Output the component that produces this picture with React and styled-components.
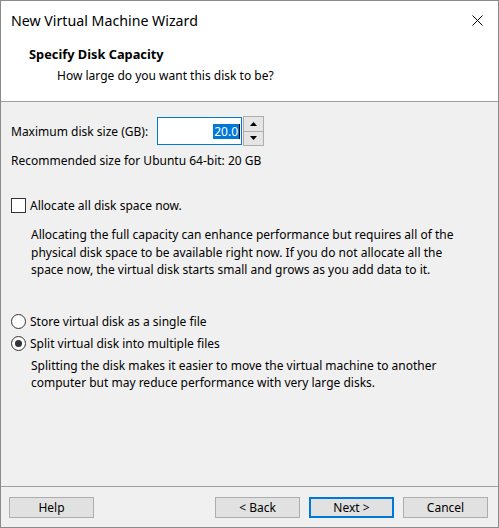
import React from 'react';
import styled, { createGlobalStyle } from 'styled-components';

const Global = createGlobalStyle`
  html, body { margin: 0; padding: 0; background: #ffffff; }
  body { font-family: "Noto Sans", sans-serif; }
`;

const Window = styled.div`
  width: 499px;
  height: 528px;
  box-sizing: border-box;
  border: 1px solid #8a8a8a;
  display: flex;
  flex-direction: column;
  background: #f0f0f0;
  font-family: "Noto Sans", sans-serif;
  font-size: 12px;
  color: #000;
  overflow: hidden;
`;

const Header = styled.div`
  height: 101px;
  flex-shrink: 0;
  box-sizing: border-box;
  background: #ffffff;
  border-bottom: 1px solid #a0a0a0;
  display: flex;
  flex-direction: column;
`;

const TitleBar = styled.div`
  height: 39px;
  display: flex;
  align-items: center;
  justify-content: space-between;
  padding: 0 15px 0 10px;
`;

const Title = styled.div`
  font-size: 14.2px;
  color: #000;
`;

const CloseIcon = styled.svg`
  width: 11px;
  height: 11px;
  display: block;
`;

const HeaderText = styled.div`
  padding-left: 28px;
  display: flex;
  flex-direction: column;
`;

const Heading = styled.div`
  font-weight: 700;
  font-size: 12.8px;
  line-height: 17px;
  margin-top: 6px;
`;

const SubHeading = styled.div`
  line-height: 17px;
  margin: 4px 0 0 28px;
`;

const Body = styled.div`
  flex: 1;
  display: flex;
  flex-direction: column;
  padding: 0 10px;
`;

const SpinRow = styled.div`
  margin-top: 15px;
  height: 28px;
  display: flex;
  align-items: center;
`;

const Label = styled.div`
  width: 146px;
  flex-shrink: 0;
  line-height: 17px;
`;

const SpinBox = styled.div`
  display: flex;
  align-items: center;
`;

const TextField = styled.div`
  width: 85px;
  height: 28px;
  box-sizing: border-box;
  border: 1px solid #0078d7;
  background: #ffffff;
  display: flex;
  align-items: center;
  justify-content: flex-end;
  padding-right: 1px;
`;

const Selected = styled.span`
  background: #0078d7;
  color: #ffffff;
  line-height: 15px;
  padding: 0 1px;
`;

const Caret = styled.span`
  width: 1px;
  height: 15px;
  background: #000;
`;

const SpinButtons = styled.div`
  margin-left: 1px;
  width: 21px;
  height: 30px;
  display: flex;
  flex-direction: column;
`;

const SpinButton = styled.div`
  flex: 1;
  box-sizing: border-box;
  border: 1px solid #adadad;
  border-top-width: ${p => (p.$down ? '0' : '1px')};
  background: #e5e5e5;
  display: flex;
  align-items: center;
  justify-content: center;
`;

const Arrow = styled.svg`
  width: 7px;
  height: 4px;
  display: block;
`;

const Line = styled.div`
  line-height: 17px;
  margin-top: ${p => p.$mt || 0}px;
`;

const OptionRow = styled.div`
  margin-top: ${p => p.$mt || 0}px;
  height: 17px;
  display: flex;
  align-items: center;
`;

const CheckBox = styled.div`
  width: 15px;
  height: 15px;
  box-sizing: border-box;
  border: 1px solid #333333;
  background: #ffffff;
  margin-right: 4px;
  flex-shrink: 0;
`;

const Radio = styled.div`
  width: 15px;
  height: 15px;
  box-sizing: border-box;
  border: 1px solid #333333;
  border-radius: 50%;
  background: #ffffff;
  margin-right: 4px;
  flex-shrink: 0;
  display: flex;
  align-items: center;
  justify-content: center;
  &::after {
    content: '';
    width: 7px;
    height: 7px;
    border-radius: 50%;
    background: ${p => (p.$checked ? '#333333' : 'transparent')};
  }
`;

const Paragraph = styled.div`
  margin: ${p => p.$mt || 0}px 0 0 20px;
  line-height: 17.5px;
`;

const Footer = styled.div`
  flex-shrink: 0;
  height: 41px;
  box-sizing: border-box;
  border-top: 1px solid #a0a0a0;
  padding: 10px 10px 0 8px;
  display: flex;
  align-items: flex-start;
`;

const Spacer = styled.div`
  flex: 1;
`;

const ButtonGroup = styled.div`
  display: flex;
  gap: 9px;
`;

const Button = styled.div`
  width: 85px;
  height: 21px;
  box-sizing: border-box;
  border: ${p => (p.$default ? '2px solid #0078d7' : '1px solid #adadad')};
  background: #e1e1e1;
  display: flex;
  align-items: center;
  justify-content: center;
  line-height: 17px;
`;

export default function App() {
  return (
    <>
      <Global />
      <Window>
        <Header>
          <TitleBar>
            <Title>New Virtual Machine Wizard</Title>
            <CloseIcon viewBox="0 0 11 11">
              <path d="M0.5 0.5 L10.5 10.5 M10.5 0.5 L0.5 10.5" stroke="#000" strokeWidth="1" fill="none" />
            </CloseIcon>
          </TitleBar>
          <HeaderText>
            <Heading>Specify Disk Capacity</Heading>
            <SubHeading>How large do you want this disk to be?</SubHeading>
          </HeaderText>
        </Header>
        <Body>
          <SpinRow>
            <Label>Maximum disk size (GB):</Label>
            <SpinBox>
              <TextField>
                <Selected>20.0</Selected>
                <Caret />
              </TextField>
              <SpinButtons>
                <SpinButton>
                  <Arrow viewBox="0 0 7 4"><path d="M0 4 L3.5 0 L7 4 Z" fill="#000" /></Arrow>
                </SpinButton>
                <SpinButton $down>
                  <Arrow viewBox="0 0 7 4"><path d="M0 0 L7 0 L3.5 4 Z" fill="#000" /></Arrow>
                </SpinButton>
              </SpinButtons>
            </SpinBox>
          </SpinRow>
          <Line $mt={7}>Recommended size for Ubuntu 64-bit: 20 GB</Line>
          <OptionRow $mt={28}>
            <CheckBox />
            <span>Allocate all disk space now.</span>
          </OptionRow>
          <Paragraph $mt={12}>
            Allocating the full capacity can enhance performance but requires all of the<br />
            physical disk space to be available right now. If you do not allocate all the<br />
            space now, the virtual disk starts small and grows as you add data to it.
          </Paragraph>
          <OptionRow $mt={34}>
            <Radio />
            <span>Store virtual disk as a single file</span>
          </OptionRow>
          <OptionRow $mt={5}>
            <Radio $checked />
            <span>Split virtual disk into multiple files</span>
          </OptionRow>
          <Paragraph $mt={5}>
            Splitting the disk makes it easier to move the virtual machine to another<br />
            computer but may reduce performance with very large disks.
          </Paragraph>
        </Body>
        <Footer>
          <Button>Help</Button>
          <Spacer />
          <ButtonGroup>
            <Button>&lt; Back</Button>
            <Button $default>Next &gt;</Button>
            <Button>Cancel</Button>
          </ButtonGroup>
        </Footer>
      </Window>
    </>
  );
}
